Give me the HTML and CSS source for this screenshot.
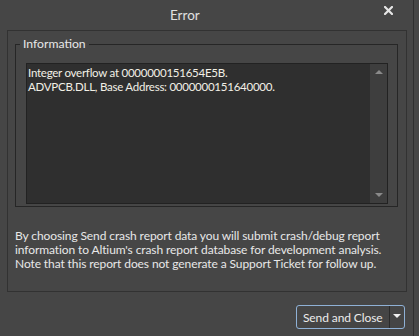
FILE: index.html
```html
<!DOCTYPE html>
<html lang="en">
<head>
    <meta charset="UTF-8">
    <title>Error</title>
    <link rel="stylesheet" href="styles.css">
</head>
<body>
    <div class="window">
        <div class="titlebar">
            <span class="title">Error</span>
            <button class="close-btn" aria-label="Close">
                <svg width="9" height="9" viewBox="0 0 9 9">
                    <path d="M1 1 L8 8 M8 1 L1 8" stroke="#e6e6e6" stroke-width="2.2" stroke-linecap="square"/>
                </svg>
            </button>
        </div>

        <div class="panel">
            <fieldset class="info-group">
                <legend>Information</legend>
                <div class="info-box">
                    <div class="info-text">
                        Integer overflow at 0000000151654E5B.<br>
                        ADVPCB.DLL, Base Address: 0000000151640000.
                    </div>
                    <div class="scrollbar">
                        <span class="arrow-up"></span>
                        <span class="arrow-down"></span>
                    </div>
                </div>
            </fieldset>
            <p class="notice">
                By choosing Send crash report data you will submit crash/debug report<br>
                information to Altium's crash report database for development analysis.<br>
                Note that this report does not generate a Support Ticket for follow up.
            </p>
        </div>

        <div class="footer">
            <div class="split-btn">
                <span class="split-main">Send and Close</span>
                <span class="split-arrow"></span>
            </div>
        </div>
    </div>
</body>
</html>
```

FILE: styles.css
```css
body {
    margin: 0;
    background: #464646;
    font-family: Lato, 'Open Sans', sans-serif;
    font-size: 12px;
    letter-spacing: -0.1px;
    color: #e8e8e8;
}
.window {
    width: 414px;
    height: 336px;
    border-right: 1px solid #2f2f2f;
    box-sizing: border-box;
}
.titlebar {
    height: 30px;
    display: flex;
    align-items: center;
    position: relative;
}
.title {
    margin-left: 170px;
    font-size: 13.5px;
    letter-spacing: 0;
    color: #e0e0e0;
    margin-top: -1px;
}
.close-btn {
    position: absolute;
    left: 384px;
    top: 6px;
    width: 10px;
    height: 10px;
    padding: 0;
    border: none;
    background: none;
    display: flex;
}
.panel {
    margin-left: 7px;
    width: 400px;
    height: 262px;
    box-sizing: border-box;
    border: 1px solid #323232;
    padding: 6px 8px 0 7px;
}
.info-group {
    margin: 0;
    border: 1px solid #262626;
    padding: 12px 9px 10px 10px;
    height: 170px;
    box-sizing: border-box;
}
.info-group legend {
    padding: 0 3px;
    margin-left: -6px;
    font-size: 12.2px;
    letter-spacing: 0;
    color: #e8e8e8;
    line-height: 14px;
}
.info-box {
    display: flex;
    height: 141px;
    border: 1px solid #222;
    background: #2f2f2f;
    box-sizing: border-box;
}
.info-text {
    flex: 1;
    padding: 2px 1px;
    font-size: 11.5px;
    letter-spacing: -0.25px;
    line-height: 13.5px;
    white-space: nowrap;
    color: #f2efe6;
}
.scrollbar {
    width: 17px;
    background: #3e3e3e;
    display: flex;
    flex-direction: column;
    justify-content: space-between;
    align-items: center;
    padding: 6px 0 6px;
}
.arrow-up {
    width: 0;
    height: 0;
    border-left: 4px solid transparent;
    border-right: 4px solid transparent;
    border-bottom: 4px solid #8a8a8a;
}
.arrow-down {
    width: 0;
    height: 0;
    border-left: 4px solid transparent;
    border-right: 4px solid transparent;
    border-top: 4px solid #8a8a8a;
}
.notice {
    margin: 22px 0 0 0;
    line-height: 14px;
    white-space: nowrap;
    color: #e8e8e8;
}
.footer {
    display: flex;
    justify-content: flex-end;
    padding: 13px 8px 0 0;
}
.split-btn {
    display: flex;
    height: 24px;
    width: 109px;
    box-sizing: border-box;
    border: 1px solid #8fb1d6;
    border-radius: 3px;
    background: #454545;
    align-items: stretch;
}
.split-main {
    flex: 1;
    display: flex;
    align-items: center;
    padding-left: 6px;
    border-right: 1px solid #2a2a2a;
    color: #ececec;
}
.split-arrow {
    width: 14px;
    display: flex;
    align-items: center;
    justify-content: center;
}
.split-arrow::before {
    content: "";
    border-left: 4px solid transparent;
    border-right: 4px solid transparent;
    border-top: 4px solid #f0f0f0;
    margin-top: -2px;
}
```
